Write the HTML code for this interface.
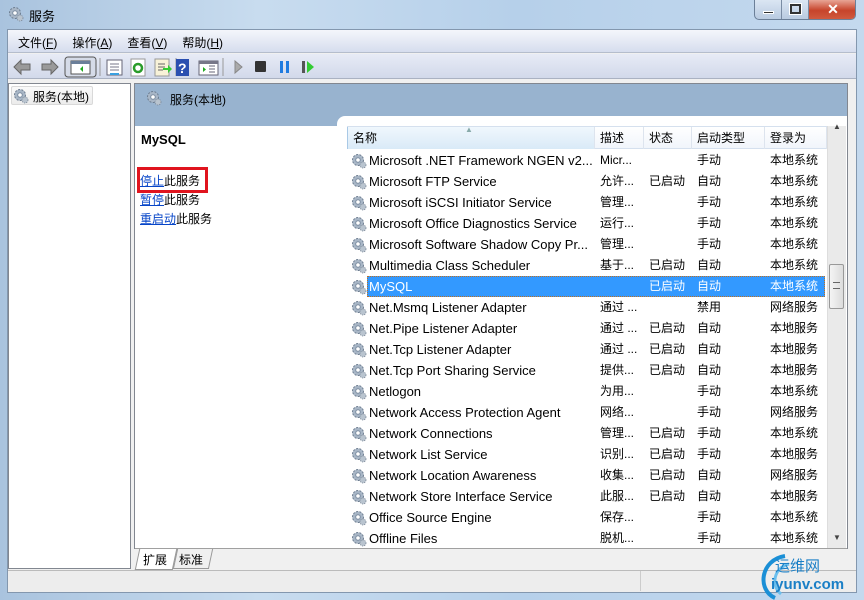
<!DOCTYPE html>
<html><head><meta charset="utf-8"><style>
*{margin:0;padding:0;box-sizing:border-box}
body{width:864px;height:600px;overflow:hidden;position:relative;font-family:"Liberation Sans","Noto Sans CJK SC",sans-serif;font-size:12px;color:#000;
background:linear-gradient(90deg,#a9c3de 0%,#c8dcef 30%,#b6d0ea 60%,#c4d9ee 100%)}
.a{position:absolute}
.menu span{margin-right:15px}
.g{display:inline-block;width:16px;height:16px;vertical-align:middle}
.row{position:absolute;left:347px;width:480px;height:21px;line-height:21px;font-size:13px}
.row .c{position:absolute;white-space:nowrap}
.row .n{left:22px}.row .d{left:253px}.row .s{left:302px}.row .t{left:350px}.row .l{left:423px}
.row svg{position:absolute;left:4px;top:3px}
.hdr span{position:absolute;top:0;height:22px;line-height:22px;font-size:12px;border-right:1px solid #dde4ee;padding-left:5px}
</style></head><body>
<svg width="0" height="0" style="position:absolute"><defs>
<g id="gear"><circle cx="7" cy="7" r="5.5" fill="#a8b6c6" stroke="#6d7d90" stroke-width="1" stroke-dasharray="2 1.4"/><circle cx="7" cy="7" r="2.3" fill="#fff" stroke="#7d8ea2"/><circle cx="12" cy="12" r="3" fill="#b9c4cf" stroke="#7a8796" stroke-width=".8" stroke-dasharray="1.2 1"/></g>
</defs></svg>
<!-- title -->
<svg class="a" style="left:8px;top:6px" width="16" height="16"><use href="#gear"/></svg>
<div class="a" style="left:29px;top:6px;font-size:13px">服务</div>
<div class="a" style="left:754px;top:0;width:102px;height:20px;border:1px solid #6b7f98;border-top:none;border-radius:0 0 5px 5px;background:linear-gradient(#dbe6f3,#b9cbe1);overflow:hidden">
<div class="a" style="left:0;top:0;width:27px;height:19px;border-right:1px solid #7a8ca4"><div class="a" style="left:8px;top:11px;width:11px;height:3px;background:#333;border:1px solid #fff"></div></div>
<div class="a" style="left:27px;top:0;width:27px;height:19px;border-right:1px solid #7a8ca4"><div class="a" style="left:8px;top:4px;width:11px;height:10px;border:2px solid #333;outline:1px solid #fff"></div></div>
<div class="a" style="left:54px;top:0;width:48px;height:19px;background:linear-gradient(#e8a595,#c7442b 55%,#d05a3f);color:#fff;font-weight:bold;font-size:14px;text-align:center;line-height:18px">✕</div></div>
<!-- inner frame -->
<div class="a" style="left:7px;top:29px;width:850px;height:564px;background:#f0f0f0;border:1px solid #8397ae"></div>
<div class="a menu" style="left:8px;top:30px;width:848px;height:23px;background:linear-gradient(#f4f6fb,#d6ddee);padding:4px 0 0 10px;font-size:12px;border-bottom:1px solid #b5bdcc"><span>文件(<u>F</u>)</span><span>操作(<u>A</u>)</span><span>查看(<u>V</u>)</span><span>帮助(<u>H</u>)</span></div>
<div class="a" style="left:8px;top:54px;width:848px;height:25px;background:linear-gradient(#e7ebf6,#d2d9ea);border-bottom:1px solid #aab2c2"></div>
<!-- toolbar icons -->
<svg class="a" style="left:10px;top:56px" width="320" height="22">
<path d="M4 11 L11 4 V8 H20 V14 H11 V18Z" fill="#9a9a9a" stroke="#666"/>
<path d="M48 11 L41 4 V8 H32 V14 H41 V18Z" fill="#9a9a9a" stroke="#666"/>
<line x1="57" y1="2" x2="57" y2="20" stroke="#999"/>
<rect x="55" y="1" width="31" height="20" rx="3" fill="#d5dbe8" stroke="#555"/>
<rect x="61" y="5" width="19" height="13" fill="#fff" stroke="#555"/><rect x="61" y="5" width="19" height="3" fill="#6b7f99"/><path d="M73 10 L70 13 L73 16Z" fill="#2a2"/>
<line x1="90" y1="2" x2="90" y2="20" stroke="#999"/>
<rect x="97" y="4" width="15" height="15" fill="#fff" stroke="#667"/><path d="M100 8h9M100 11h9M100 14h9" stroke="#778"/><rect x="100" y="17" width="9" height="2" fill="#3aa0e0"/>
<rect x="121" y="3" width="14" height="17" fill="#fff" stroke="#999"/><circle cx="128" cy="12" r="4" fill="none" stroke="#2a9c2a" stroke-width="2.5"/>
<rect x="145" y="3" width="14" height="17" fill="#f8f2d8" stroke="#999"/><path d="M148 8h7M148 11h7M148 14h5" stroke="#666"/><path d="M153 12h5v-3l4 4-4 4v-3h-5Z" fill="#3c3"/>
<line x1="166" y1="2" x2="166" y2="20" stroke="#999"/>
<rect x="166" y="3" width="13" height="17" fill="#2a4fb0"/><text x="168" y="17" fill="#fff" font-size="14" font-weight="bold" font-family="Liberation Sans">?</text>
<rect x="189" y="5" width="19" height="14" fill="#fff" stroke="#667"/><rect x="189" y="5" width="19" height="3" fill="#778"/><path d="M193 11v5l3-2.5Z" fill="#2a2"/><path d="M199 10h6M199 13h6M199 16h6" stroke="#667"/>
<line x1="213" y1="2" x2="213" y2="20" stroke="#999"/>
<path d="M225 5 L232 11 L225 17Z" fill="#aaa" stroke="#888"/>
<rect x="245" y="5" width="11" height="11" fill="#333" rx="1"/>
<rect x="270" y="5" width="3" height="12" fill="#1e7be0"/><rect x="276" y="5" width="3" height="12" fill="#1e7be0"/>
<rect x="292" y="5" width="3" height="12" fill="#555"/><path d="M297 5 L304 11 L297 17Z" fill="#3c3"/>
</svg>
<!-- left tree -->
<div class="a" style="left:8px;top:83px;width:123px;height:486px;background:#fff;border:1px solid #828790"></div>
<div class="a" style="left:11px;top:86px;width:82px;height:19px;border:1px solid #d9d9d9;border-radius:2px;background:linear-gradient(#fafafa,#ececec)"></div>
<svg class="a" style="left:13px;top:88px" width="16" height="16"><use href="#gear"/></svg>
<div class="a" style="left:33px;top:88px;font-size:12px">服务(本地)</div>
<!-- right pane -->
<div class="a" style="left:134px;top:83px;width:714px;height:466px;background:#fff;border:1px solid #828790"></div>
<div class="a" style="left:135px;top:84px;width:712px;height:42px;background:#98b3cf"></div>
<svg class="a" style="left:146px;top:90px" width="16" height="16"><use href="#gear"/></svg>
<div class="a" style="left:170px;top:91px;font-size:12px">服务(本地)</div>
<div class="a" style="left:337px;top:116px;width:510px;height:20px;background:#fff;border-radius:8px 0 0 0"></div>
<div class="a" style="left:141px;top:132px;font-weight:bold;font-size:13px">MySQL</div>
<div class="a" style="left:137px;top:167px;width:71px;height:26px;border:3px solid #e0141e"></div>
<div class="a" style="left:140px;top:172px;font-size:12px;line-height:19px"><u style="color:#0645c8">停止</u>此服务<br><u style="color:#0645c8">暂停</u>此服务<br><u style="color:#0645c8">重启动</u>此服务</div>
<!-- header -->
<div class="a hdr" style="left:347px;top:126px;width:480px;height:23px;background:linear-gradient(#fff,#f1f5fb);border-top:1px solid #d5e0ee;border-bottom:1px solid #d5e0ee">
<span style="left:0;width:248px;background:linear-gradient(#f0f7fd,#d9eaf7);border-left:1px solid #a9c9e6">名称</span>
<span style="left:248px;width:49px">描述</span><span style="left:297px;width:48px">状态</span><span style="left:345px;width:73px">启动类型</span><span style="left:418px;width:62px">登录为</span>
<div class="a" style="left:118px;top:-2px;color:#8aa;font-size:8px">▲</div></div>
<!-- scrollbar -->
<div class="a" style="left:827px;top:126px;width:19px;height:423px;background:#eaeaea;border-left:1px solid #ddd"></div>
<div class="a" style="left:833px;top:122px;font-size:8px;color:#444">▲</div>
<div class="a" style="left:833px;top:533px;font-size:8px;color:#444">▼</div>
<div class="a" style="left:829px;top:264px;width:15px;height:45px;border:1px solid #999;border-radius:2px;background:linear-gradient(90deg,#f4f4f4,#dcdcdc)"></div>
<div class="a" style="left:833px;top:282px;width:7px;height:7px;border-top:1px solid #666;border-bottom:1px solid #666"></div>
<div id="rows"></div>
<!-- tabs -->
<div class="a" style="left:135px;top:548px;width:712px;height:1px;background:#a0a0a0"></div>
<div class="a" style="left:137px;top:549px;width:38px;height:21px;background:#fff;border:1px solid #999;border-top:none;transform:skewX(-12deg)"></div>
<div class="a" style="left:143px;top:551px;font-size:12px">扩展</div>
<div class="a" style="left:175px;top:549px;width:36px;height:20px;border:1px solid #999;border-top:none;transform:skewX(-12deg)"></div>
<div class="a" style="left:179px;top:551px;font-size:12px">标准</div>
<div class="a" style="left:8px;top:570px;width:848px;height:22px;background:#ededed;border-top:1px solid #bbb"></div>
<div class="a" style="left:640px;top:571px;width:1px;height:20px;background:#ccc"></div>
<!-- watermark -->
<svg class="a" style="left:755px;top:550px" width="109" height="50"><path d="M30 6 C5 10 2 40 20 48" fill="none" stroke="#1a8fd6" stroke-width="4"/><path d="M34 14 C18 18 16 36 26 44" fill="none" stroke="#6cc0ee" stroke-width="3"/></svg>
<div class="a" style="left:775px;top:555px;color:#1a7fc6;font-size:15px">运维网</div>
<div class="a" style="left:771px;top:576px;color:#1a7fc6;font-size:15px;font-weight:bold">iyunv.com</div>
<script>
var d=[["Microsoft .NET Framework NGEN v2...","Micr...","","手动","本地系统"],["Microsoft FTP Service","允许...","已启动","自动","本地系统"],["Microsoft iSCSI Initiator Service","管理...","","手动","本地系统"],["Microsoft Office Diagnostics Service","运行...","","手动","本地系统"],["Microsoft Software Shadow Copy Pr...","管理...","","手动","本地系统"],["Multimedia Class Scheduler","基于...","已启动","自动","本地系统"],["MySQL","","已启动","自动","本地系统"],["Net.Msmq Listener Adapter","通过 ...","","禁用","网络服务"],["Net.Pipe Listener Adapter","通过 ...","已启动","自动","本地服务"],["Net.Tcp Listener Adapter","通过 ...","已启动","自动","本地服务"],["Net.Tcp Port Sharing Service","提供...","已启动","自动","本地服务"],["Netlogon","为用...","","手动","本地系统"],["Network Access Protection Agent","网络...","","手动","网络服务"],["Network Connections","管理...","已启动","手动","本地系统"],["Network List Service","识别...","已启动","手动","本地服务"],["Network Location Awareness","收集...","已启动","自动","网络服务"],["Network Store Interface Service","此服...","已启动","自动","本地服务"],["Office Source Engine","保存...","","手动","本地系统"],["Offline Files","脱机...","","手动","本地系统"]];
var h="";d.forEach(function(r,i){var sel=i==6;h+='<div class="row" style="top:'+(150+i*21)+'px;'+(sel?'color:#fff;':'')+'">'+(sel?'<div class="a" style="left:20px;top:0;width:458px;height:21px;background:#3399ff;border:1px dotted #c07020"></div>':'')+'<svg width="16" height="16"><use href="#gear"/></svg><span class="c n">'+r[0]+'</span><span class="c d" style="font-size:12px">'+r[1]+'</span><span class="c s" style="font-size:12px">'+r[2]+'</span><span class="c t" style="font-size:12px">'+r[3]+'</span><span class="c l" style="font-size:12px">'+r[4]+'</span></div>'});
document.getElementById("rows").innerHTML=h;
</script>
</body></html>
